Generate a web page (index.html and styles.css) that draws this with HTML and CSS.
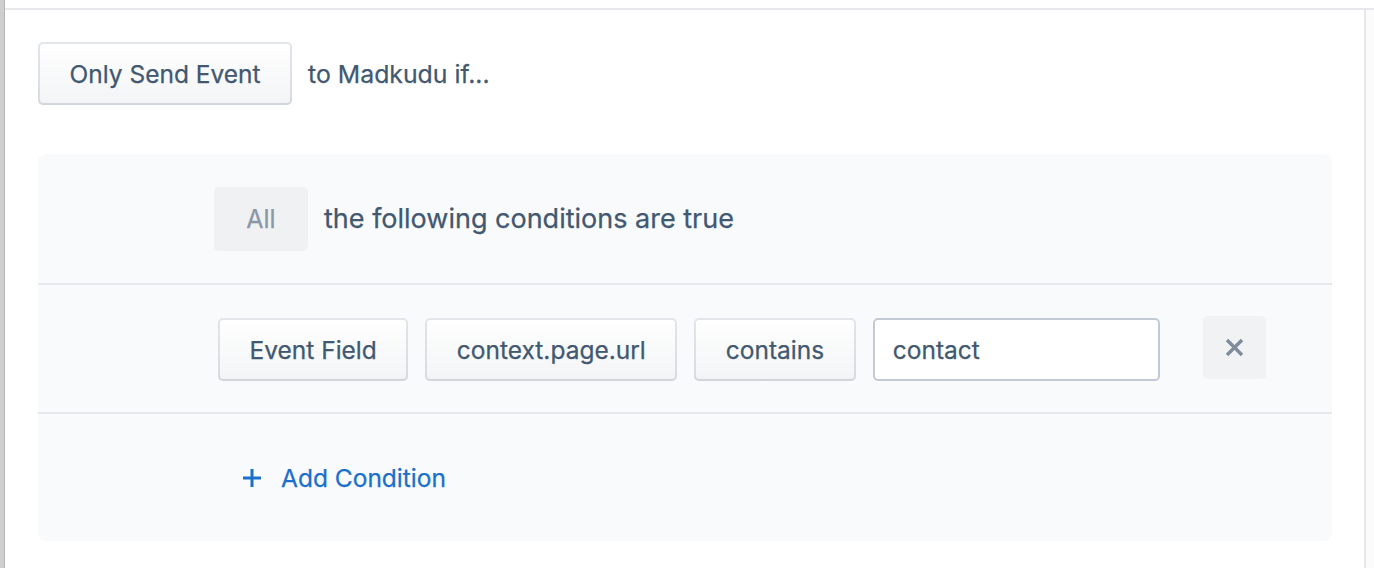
FILE: index.html
```html
<!DOCTYPE html>
<html>
<head>
<meta charset="utf-8">
<link rel="stylesheet" href="styles.css">
</head>
<body>
<div class="frame">
  <div class="side-strip"></div>
  <main class="main">
    <div class="send-row">
      <button class="btn">Only Send Event</button>
      <span class="send-label">to Madkudu if...</span>
    </div>
    <section class="panel">
      <div class="panel-row header-row">
        <span class="all-box">All</span>
        <span class="header-text">the following conditions are true</span>
      </div>
      <div class="panel-row cond-row">
        <button class="btn">Event Field</button>
        <button class="btn">context.page.url</button>
        <button class="btn">contains</button>
        <div class="input">contact</div>
        <span class="remove-btn">
          <svg width="19" height="19" viewBox="0 0 19 19"><path d="M2 2 L17 17 M17 2 L2 17" stroke="#7e8c9b" stroke-width="3.4" stroke-linecap="butt" fill="none"/></svg>
        </span>
      </div>
      <div class="panel-row add-row">
        <span class="add-link">
          <svg class="plus" width="18" height="18" viewBox="0 0 18 18"><path d="M9 0 V18 M0 9 H18" stroke="#1a6fcc" stroke-width="3" fill="none"/></svg>
          <span>Add Condition</span>
        </span>
      </div>
    </section>
  </main>
  <div class="right-strip"></div>
</div>
</body>
</html>
```

FILE: styles.css
```css
* { box-sizing: border-box; }
html, body { margin: 0; padding: 0; background: #ffffff; }
body {
  font-family: Inter, "Liberation Sans", Arial, sans-serif;
  color: #415870;
  width: 1374px;
  height: 568px;
  overflow: hidden;
  -webkit-text-stroke: 0.25px currentColor;
}
.frame {
  display: flex;
  height: 568px;
}
.side-strip {
  width: 5px;
  flex: none;
  background: #cfcfcf;
  border-right: 1px solid #b5b5b5;
}
.main {
  flex: 1;
  margin-top: 8px;
  border-top: 2px solid #e6e8eb;
  padding: 32px 32px 0 33px;
}
.right-strip {
  width: 10px;
  flex: none;
  margin-top: 8px;
  border-top: 2px solid #e6e8eb;
  border-left: 2px solid #e6e8eb;
  background: #fbfbfc;
}
.send-row {
  display: flex;
  align-items: center;
  gap: 16px;
  height: 63px;
}
.btn {
  font-family: inherit;
  font-size: 24.5px;
  color: #415870;
  -webkit-text-stroke: 0.25px currentColor;
  height: 63px;
  padding: 0 31.5px;
  border: none;
  border-radius: 5px;
  background: linear-gradient(to bottom, #ffffff, #f3f4f6);
  box-shadow: inset 0 0 0 2px rgba(67, 90, 111, 0.15), inset 0 -2px 2px 0 rgba(67, 90, 111, 0.05);
  display: flex;
  align-items: center;
  flex: none;
}
.send-label {
  font-size: 24.8px;
}
.panel {
  margin-top: 49px;
  background: #f9fafb;
  border-radius: 8px;
  width: 1294px;
}
.panel-row {
  display: flex;
  align-items: center;
}
.header-row {
  height: 131px;
  padding-left: 176px;
  gap: 16px;
  border-bottom: 2px solid #e6e8eb;
}
.all-box {
  width: 94px;
  height: 64px;
  background: #f0f1f3;
  border-radius: 5px;
  color: #8a97a6;
  font-size: 25px;
  display: flex;
  align-items: center;
  justify-content: center;
}
.header-text {
  font-size: 27px;
}
.cond-row {
  height: 129px;
  padding-left: 180px;
  padding-top: 2px;
  gap: 17px;
  border-bottom: 2px solid #e6e8eb;
}
.input {
  width: 287px;
  height: 63px;
  background: #ffffff;
  border-radius: 5px;
  box-shadow: inset 0 0 0 2px #c2cad3;
  font-size: 24.5px;
  padding-left: 20px;
  display: flex;
  align-items: center;
  flex: none;
}
.remove-btn {
  margin-left: 26px;
  width: 63px;
  height: 63px;
  border-radius: 5px;
  background: #f1f2f4;
  display: flex;
  align-items: center;
  justify-content: center;
  margin-top: -4px;
}
.add-row {
  height: 127px;
  padding-left: 205px;
}
.add-link {
  display: flex;
  align-items: center;
  gap: 20px;
  color: #1a6fcc;
  font-size: 24.5px;
}
```
